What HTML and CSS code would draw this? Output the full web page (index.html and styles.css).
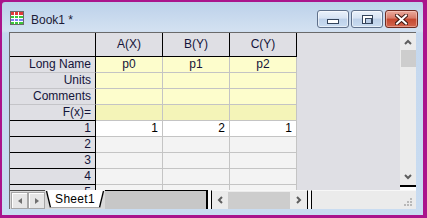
FILE: index.html
```html
<!DOCTYPE html>
<html>
<head>
<meta charset="utf-8">
<link rel="stylesheet" href="styles.css">
</head>
<body>
<div class="window">
  <div class="titlebar">
    <svg class="appicon" width="14" height="14" viewBox="0 0 14 14">
      <rect x="0.5" y="0.5" width="13" height="13" fill="#ffffff" stroke="#6b6b6b"/>
      <rect x="1" y="1" width="12" height="3" fill="#e23a3a"/>
      <rect x="1" y="5" width="12" height="2" fill="#3cc83c"/>
      <rect x="1" y="8" width="12" height="2" fill="#7d7df2"/>
      <rect x="1" y="11" width="12" height="2" fill="#3cc83c"/>
      <rect x="4" y="1" width="1" height="12" fill="#ffffff"/>
      <rect x="8" y="1" width="1" height="12" fill="#ffffff"/>
    </svg>
    <span class="title">Book1 *</span>
    <div class="tbtns">
      <div class="tbtn"><span class="gmin"></span></div>
      <div class="tbtn"><span class="gmax"></span></div>
      <div class="tbtn close">
        <svg width="13" height="11" viewBox="0 0 13 11">
          <path d="M2 1.5 L11 9.5 M11 1.5 L2 9.5" stroke="#3d1812" stroke-width="4" stroke-linecap="square"/>
          <path d="M2 1.5 L11 9.5 M11 1.5 L2 9.5" stroke="#ffffff" stroke-width="2" stroke-linecap="square"/>
        </svg>
      </div>
    </div>
  </div>
  <div class="client">
    <div class="upper">
      <div class="sheet">
        <div class="grid">
          <div class="ch"></div>
          <div class="ch">A(X)</div>
          <div class="ch">B(Y)</div>
          <div class="ch">C(Y)</div>

          <div class="rh lbl">Long Name</div>
          <div class="lc">p0</div>
          <div class="lc">p1</div>
          <div class="lc">p2</div>

          <div class="rh lbl">Units</div>
          <div class="lc"></div>
          <div class="lc"></div>
          <div class="lc"></div>

          <div class="rh lbl">Comments</div>
          <div class="lc"></div>
          <div class="lc"></div>
          <div class="lc"></div>

          <div class="rh num">F(x)=</div>
          <div class="lc fx"></div>
          <div class="lc fx"></div>
          <div class="lc fx"></div>

          <div class="rh num">1</div>
          <div class="dc w">1</div>
          <div class="dc w">2</div>
          <div class="dc w">1</div>

          <div class="rh num">2</div>
          <div class="dc"></div>
          <div class="dc"></div>
          <div class="dc"></div>

          <div class="rh num">3</div>
          <div class="dc"></div>
          <div class="dc"></div>
          <div class="dc"></div>

          <div class="rh num">4</div>
          <div class="dc"></div>
          <div class="dc"></div>
          <div class="dc"></div>

          <div class="rh num">5</div>
          <div class="dc"></div>
          <div class="dc"></div>
          <div class="dc"></div>
        </div>
      </div>
      <div class="vscroll">
        <div class="varrow">
          <svg width="8" height="6" viewBox="0 0 8 6"><path d="M1 5 L4 2 L7 5" fill="none" stroke="#5e5e5e" stroke-width="2"/></svg>
        </div>
        <div class="vthumb"></div>
        <div class="vtrack"></div>
        <div class="varrow">
          <svg width="8" height="6" viewBox="0 0 8 6"><path d="M1 1 L4 4 L7 1" fill="none" stroke="#5e5e5e" stroke-width="2"/></svg>
        </div>
        <div class="vend"></div>
      </div>
    </div>
    <div class="bottombar">
      <div class="nav">
        <div class="navbtn"><span class="tri-left"></span></div>
        <div class="navbtn"><span class="tri-right"></span></div>
      </div>
      <div class="tab">
        <svg class="tabshape" width="60" height="19" viewBox="0 0 60 19">
          <polygon points="1,0 5.5,17.5 54.5,17.5 59,0" fill="#ffffff"/>
          <path d="M1.5 1 L5.5 17.5" stroke="#000" stroke-width="1.3" fill="none"/>
          <path d="M58.5 1 L54.5 17.5" stroke="#000" stroke-width="1.3" fill="none"/>
          <path d="M5.5 17.5 L54.5 17.5" stroke="#a8a8a8" stroke-width="1" fill="none"/>
        </svg>
        <span class="tablabel">Sheet1</span>
      </div>
      <div class="tabfill"></div>
      <div class="split"></div>
      <div class="hscroll">
        <div class="harrow">
          <svg width="6" height="8" viewBox="0 0 6 8"><path d="M5 1 L2 4 L5 7" fill="none" stroke="#5e5e5e" stroke-width="2"/></svg>
        </div>
        <div class="hthumb"></div>
        <div class="htrack"></div>
        <div class="harrow">
          <svg width="6" height="8" viewBox="0 0 6 8"><path d="M1 1 L4 4 L1 7" fill="none" stroke="#5e5e5e" stroke-width="2"/></svg>
        </div>
      </div>
      <div class="split"></div>
      <div class="grip">
        <svg width="10" height="10" viewBox="0 0 10 10">
          <rect x="7" y="1" width="2" height="2" fill="#b8b8b8"/>
          <rect x="4" y="4" width="2" height="2" fill="#b8b8b8"/>
          <rect x="7" y="4" width="2" height="2" fill="#b8b8b8"/>
          <rect x="1" y="7" width="2" height="2" fill="#b8b8b8"/>
          <rect x="4" y="7" width="2" height="2" fill="#b8b8b8"/>
          <rect x="7" y="7" width="2" height="2" fill="#b8b8b8"/>
        </svg>
      </div>
    </div>
  </div>
</div>
</body>
</html>
```

FILE: styles.css
```css
* { box-sizing: border-box; }

html, body {
  margin: 0;
  padding: 0;
  background: #aa148c;
}

body {
  width: 427px;
  height: 218px;
  overflow: hidden;
  font-family: "Liberation Sans", Arial, sans-serif;
}

.window {
  width: 427px;
  height: 218px;
  border-style: solid;
  border-color: #aa148c;
  border-width: 2px 4px 3px 2px;
  border-radius: 5px 5px 0 0;
  background: linear-gradient(#bcd1ea 0px, #d3e1f1 29px, #c5d8ee 31px, #c9dcf1 100%);
  display: flex;
  flex-direction: column;
}

.titlebar {
  height: 30px;
  display: flex;
  align-items: flex-start;
  padding: 0 5px 0 8px;
}

.appicon {
  margin-top: 9px;
  flex: none;
}

.title {
  margin-left: 7px;
  margin-top: 11px;
  font-size: 12px;
  line-height: 15px;
  color: #1b1b36;
}

.tbtns {
  margin-left: auto;
  margin-top: 8px;
  display: flex;
  gap: 2px;
}

.tbtn {
  width: 32px;
  height: 18px;
  border: 1px solid #5f708b;
  border-radius: 3px;
  background: linear-gradient(#eaf1fb 0%, #d7e3f3 45%, #bdd0e9 50%, #cadcf1 100%);
  box-shadow: inset 0 0 0 1px rgba(255, 255, 255, 0.55);
  display: flex;
  align-items: center;
  justify-content: center;
}

.tbtn.close {
  width: 33px;
  border-color: #6f2b21;
  background: linear-gradient(#eaab9e 0%, #d87a68 45%, #c5472f 50%, #d2664f 100%);
  box-shadow: inset 0 0 0 1px rgba(255, 220, 210, 0.45);
}

.gmin {
  display: block;
  width: 12px;
  height: 5px;
  margin-top: 5px;
  background: #ffffff;
  border: 1px solid #34445c;
}

.gmax {
  display: block;
  width: 11px;
  height: 9px;
  margin-top: 1px;
  background: #ffffff;
  border: 1px solid #34445c;
  padding: 2px 2px 1px 2px;
}

.gmax::after {
  content: "";
  display: block;
  width: 100%;
  height: 100%;
  border: 1px solid #34445c;
  background: #b9cce5;
}

.client {
  flex: 1;
  margin: 0 7px 6px 7px;
  border-left: 1px solid #6a6a6a;
  border-top: 1px solid #6a6a6a;
  display: flex;
  flex-direction: column;
  min-height: 0;
}

.upper {
  height: 157px;
  display: flex;
  min-height: 0;
}

.sheet {
  flex: 1;
  background: #dfdfe4;
  overflow: hidden;
}

.grid {
  display: grid;
  grid-template-columns: 86px 67px 67px 67px;
  grid-template-rows: 24px;
  grid-auto-rows: 16px;
  width: 287px;
  font-size: 12px;
  color: #14143a;
}

.grid > div {
  line-height: 15px;
  white-space: nowrap;
  overflow: hidden;
}

.ch {
  background: #dfdfe4;
  border-right: 1px solid #000;
  border-bottom: 1px solid #000;
  text-align: center;
  line-height: 23px !important;
}

.rh {
  background: #dfdfe4;
  border-right: 1px solid #000;
  text-align: right;
  padding-right: 4px;
}

.rh.lbl {
  border-bottom: 1px solid #c4c4c8;
}

.rh.num {
  border-bottom: 1px solid #000;
}

.lc {
  background: #fdfdcc;
  border-right: 1px solid #c4c4c4;
  border-bottom: 1px solid #c4c4c4;
  text-align: center;
}

.lc.fx {
  background: #f4f4b8;
}

.dc {
  background: #f3f3f3;
  border-right: 1px solid #c4c4c4;
  border-bottom: 1px solid #c4c4c4;
  text-align: right;
  padding-right: 4px;
  color: #000;
}

.dc.w {
  background: #ffffff;
}

.vscroll {
  width: 16px;
  background: #ebebeb;
  display: flex;
  flex-direction: column;
}

.varrow {
  height: 17px;
  display: flex;
  align-items: center;
  justify-content: center;
}

.vthumb {
  height: 17px;
  margin-left: 1px;
  background: #cdcdcd;
}

.vtrack {
  flex: 1;
}

.vend {
  height: 5px;
  border-top: 2px solid #000;
  background: #ffffff;
}

.bottombar {
  height: 19px;
  display: flex;
}

.nav {
  width: 35px;
  display: flex;
  padding: 1px 0 0 1px;
  background: #d9d9d9;
  border-top: 1px solid #4a4a4a;
}

.navbtn {
  width: 17px;
  height: 17px;
  border: 1px solid #a6a6a6;
  background: #e6e6e6;
  box-shadow: inset 1px 1px 0 #ffffff;
  display: flex;
  align-items: center;
  justify-content: center;
}

.tri-left {
  width: 0;
  height: 0;
  border-top: 3px solid transparent;
  border-bottom: 3px solid transparent;
  border-right: 4px solid #707070;
}

.tri-right {
  width: 0;
  height: 0;
  border-top: 3px solid transparent;
  border-bottom: 3px solid transparent;
  border-left: 4px solid #707070;
}

.tab {
  width: 60px;
  position: relative;
  display: flex;
  justify-content: center;
  background: #d9d9d9;
}

.tabshape {
  position: absolute;
  left: 0;
  top: 0;
}

.tablabel {
  position: relative;
  font-size: 12px;
  line-height: 19px;
  letter-spacing: 0.3px;
  color: #000;
}

.tabfill {
  flex: 1;
  background: #c7c7c7;
  border-top: 1px solid #000;
  border-right: 2px solid #000;
}

.split {
  width: 3px;
  background: #f7f7f7;
}

.hscroll {
  width: 97px;
  display: flex;
  background: #ebebeb;
  border-left: 1px solid #000;
  border-right: 1px solid #000;
  border-top: 1px solid #f7f7f7;
}

.harrow {
  width: 16px;
  display: flex;
  align-items: center;
  justify-content: center;
}

.hthumb {
  width: 62px;
  margin: 1px 0 0 0;
  background: #cdcdcd;
}

.htrack {
  flex: 1;
}

.grip {
  flex: 1;
  border-left: 1px solid #000;
  border-top: 1px solid #f7f7f7;
  background: #ebebeb;
  display: flex;
  align-items: flex-end;
  justify-content: flex-end;
  padding: 0 3px 2px 0;
}
```
